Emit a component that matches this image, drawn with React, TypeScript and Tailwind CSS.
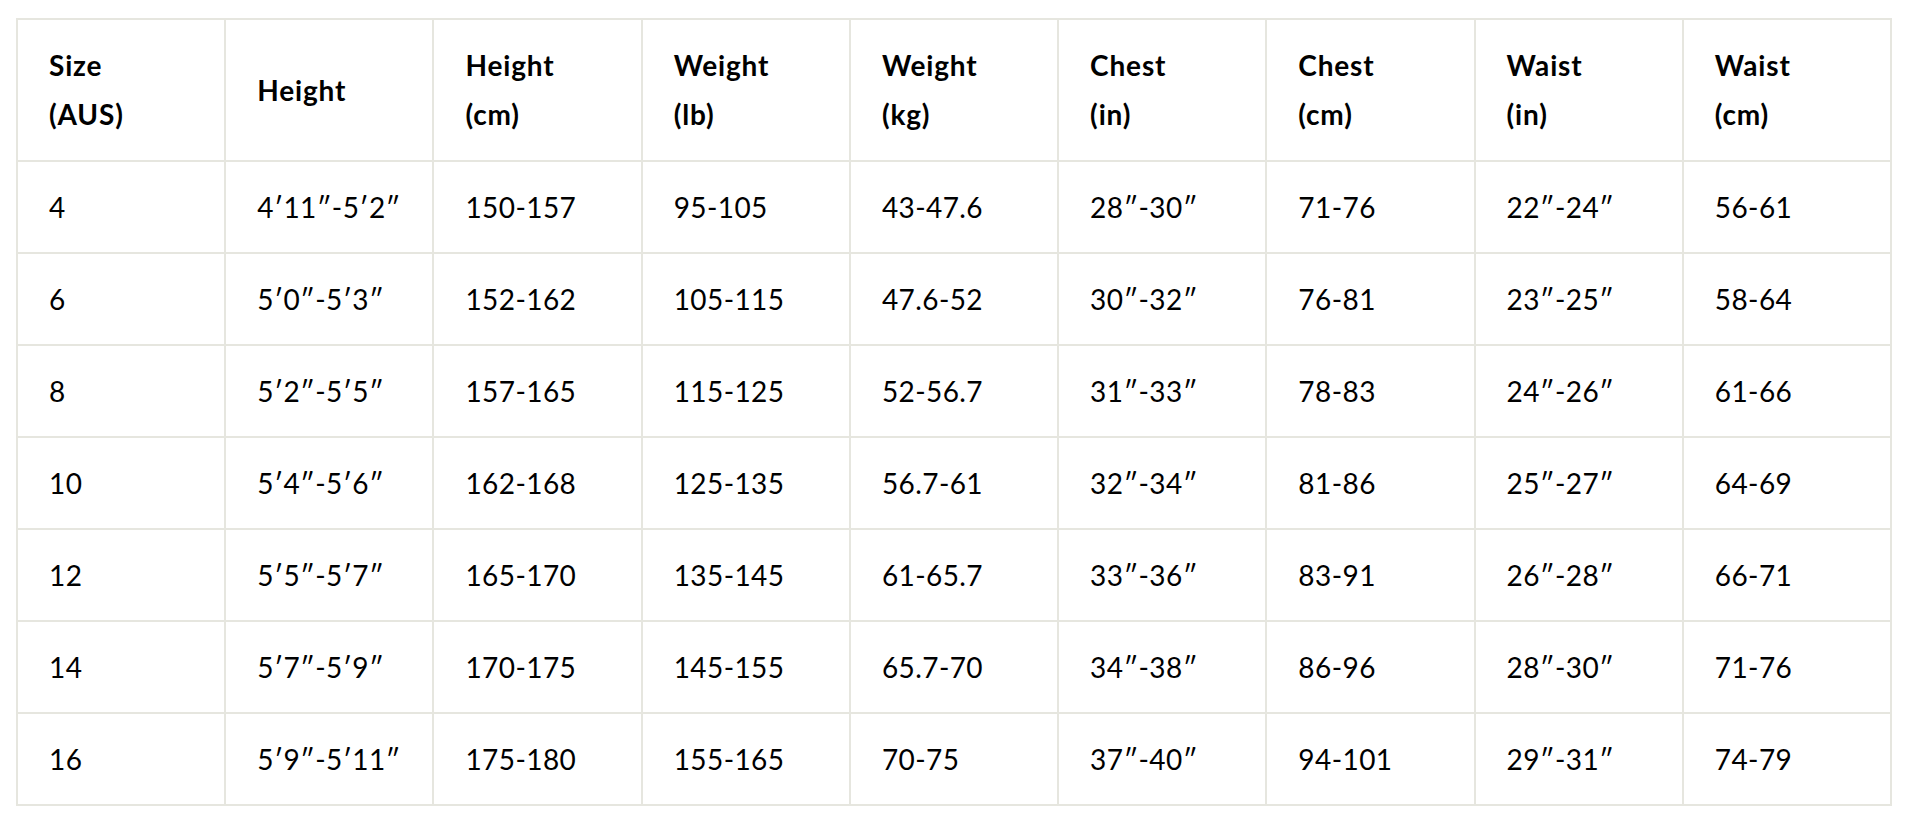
const headers = [
  ["Size", "(AUS)"],
  ["Height"],
  ["Height", "(cm)"],
  ["Weight", "(lb)"],
  ["Weight", "(kg)"],
  ["Chest", "(in)"],
  ["Chest", "(cm)"],
  ["Waist", "(in)"],
  ["Waist", "(cm)"],
];

const rows = [
  ["4", "4′11″-5′2″", "150-157", "95-105", "43-47.6", "28″-30″", "71-76", "22″-24″", "56-61"],
  ["6", "5′0″-5′3″", "152-162", "105-115", "47.6-52", "30″-32″", "76-81", "23″-25″", "58-64"],
  ["8", "5′2″-5′5″", "157-165", "115-125", "52-56.7", "31″-33″", "78-83", "24″-26″", "61-66"],
  ["10", "5′4″-5′6″", "162-168", "125-135", "56.7-61", "32″-34″", "81-86", "25″-27″", "64-69"],
  ["12", "5′5″-5′7″", "165-170", "135-145", "61-65.7", "33″-36″", "83-91", "26″-28″", "66-71"],
  ["14", "5′7″-5′9″", "170-175", "145-155", "65.7-70", "34″-38″", "86-96", "28″-30″", "71-76"],
  ["16", "5′9″-5′11″", "175-180", "155-165", "70-75", "37″-40″", "94-101", "29″-31″", "74-79"],
];

export default function App() {
  return (
    <div className="min-h-[826px] bg-white pt-[18px] pl-[16px] font-['Lato',sans-serif] text-black">
      <div className="grid w-[1876px] grid-cols-9 gap-[2px] bg-[#e6e6df] p-[2px]">
        {headers.map((h, i) => (
          <div
            key={i}
            className="flex h-[140px] flex-col justify-center bg-white pl-[31px] text-[28px] font-bold leading-[49px] tracking-[0.03em]"
          >
            {h.map((line) => (
              <span key={line}>{line}</span>
            ))}
          </div>
        ))}
        {rows.map((r) =>
          r.map((cell, j) => (
            <div
              key={r[0] + "-" + j}
              className="flex h-[90px] items-center bg-white pl-[31px] text-[28px] tracking-[0.015em]"
            >
              {cell}
            </div>
          ))
        )}
      </div>
    </div>
  );
}
